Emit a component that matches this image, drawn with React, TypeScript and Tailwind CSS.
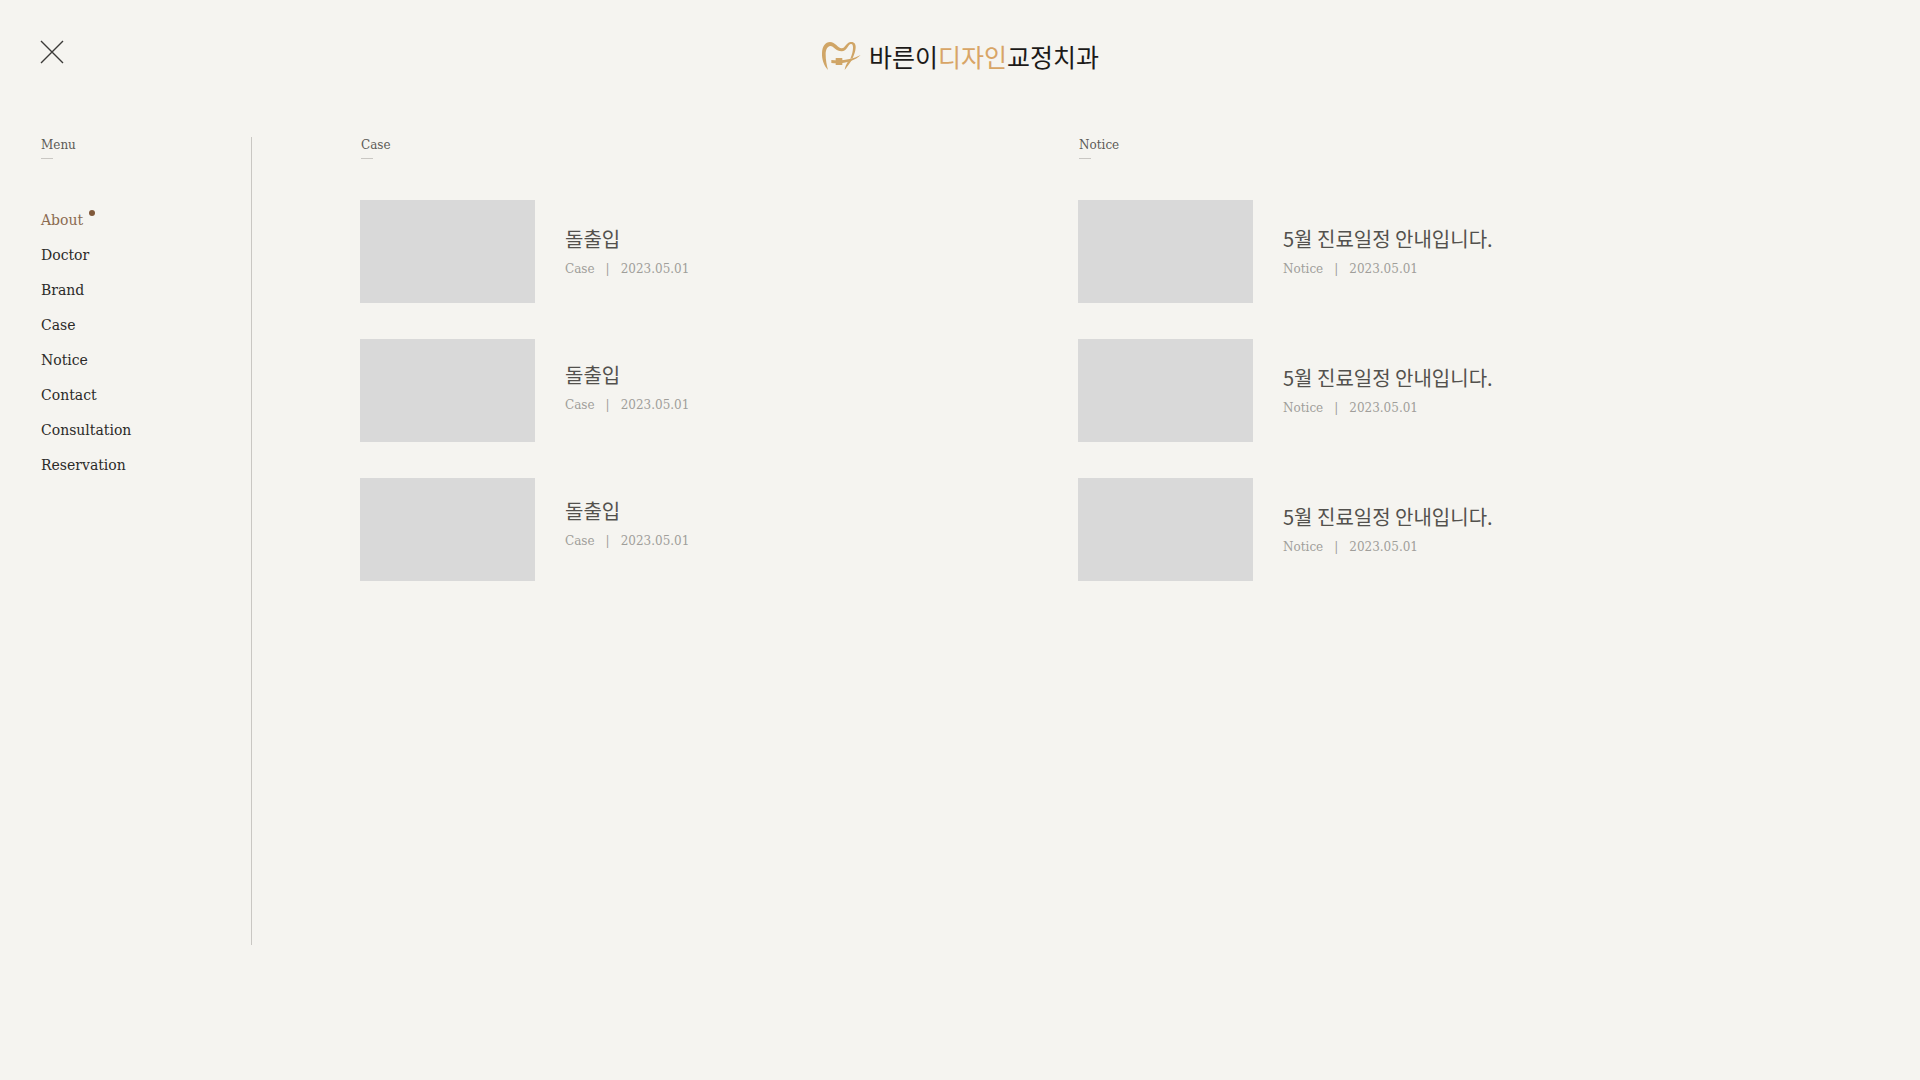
import { useState } from 'react'
import { clsx } from 'clsx'

interface Post {
  title: string
  category: string
  date: string
}

interface PostSectionProps {
  heading: string
  posts: Post[]
  textGap: string
}

const MENU = ['About', 'Doctor', 'Brand', 'Case', 'Notice', 'Contact', 'Consultation', 'Reservation']

const CASES: Post[] = Array.from({ length: 3 }, () => ({
  title: '돌출입',
  category: 'Case',
  date: '2023.05.01',
}))

const NOTICES: Post[] = Array.from({ length: 3 }, () => ({
  title: '5월 진료일정 안내입니다.',
  category: 'Notice',
  date: '2023.05.01',
}))

function ToothLogo() {
  return (
    <svg viewBox="0 0 120 90" className="h-[30px] w-10" fill="#d0a566" aria-hidden="true">
      {/* Left root, crown and the wave across the top */}
      <path d="M21 87C9 74 2 55 3 36C4 15 13 3 27 3C43 3 50 21 62 22C72 23 74 6 88 3C99 1 105 8 104 20C103 32 99 42 95 51L88 53C93 40 96 30 96 20C96 10 93 8 89 9C80 12 78 31 62 31C45 31 38 15 28 15C18 16 14 28 14 40C14 57 17 73 21 87Z" />
      {/* Bracket and wire */}
      <rect x="44" y="51" width="20" height="21" rx="1" />
      <path d="M31 57C61 61 91 56 119 42C102 60 68 70 31 66Z" />
      {/* Right root */}
      <path d="M84 58L95 53C87 65 80 76 71 87C72 77 77 67 84 58Z" />
    </svg>
  )
}

function SectionHeading({ children }: { children: string }) {
  return (
    <h2 className="pl-px text-xs leading-4 text-[#5c5a56]">
      {children}
      <span className="mt-[5px] block h-px w-3 bg-[#c9c7c3]" />
    </h2>
  )
}

function PostSection({ heading, posts, textGap }: PostSectionProps) {
  return (
    <section>
      <SectionHeading>{heading}</SectionHeading>
      <div className="mt-[41px] flex gap-[30px]">
        <div className="flex flex-col gap-9">
          {posts.map((_, i) => (
            <div key={i} className="h-[103px] w-[175px] bg-[#d9d9d9]" />
          ))}
        </div>
        <ul className={clsx('flex flex-col pt-[25px]', textGap)}>
          {posts.map((post, i) => (
            <li key={i}>
              <a href="#" className="block">
                <h3 className="font-['Noto_Sans_CJK_KR',sans-serif] text-xl leading-7 text-[#53514d]">
                  {post.title}
                </h3>
                <p className="mt-2 flex gap-[11px] text-xs leading-4 text-[#a09e9a]">
                  <span>{post.category}</span>
                  <span>|</span>
                  <time>{post.date}</time>
                </p>
              </a>
            </li>
          ))}
        </ul>
      </div>
    </section>
  )
}

export default function App() {
  const [active, setActive] = useState('About')

  return (
    <div className="flex min-h-screen flex-col bg-[#f5f4f0] pb-[135px] font-['DejaVu_Serif','Noto_Sans_CJK_KR',serif]">
      <header className="grid h-[137px] grid-cols-3 items-start px-10 pt-10">
        <button type="button" aria-label="Close menu" className="h-6 w-6">
          <svg viewBox="0 0 24 24" className="h-6 w-6" stroke="#3b3a38" strokeWidth="1.4">
            <path d="M1 1L23 23M23 1L1 23" />
          </svg>
        </button>
        <a href="#" className="flex items-center justify-center gap-2">
          <ToothLogo />
          <span className="font-['Noto_Sans_CJK_KR',sans-serif] text-[25px] leading-8 text-[#1c1a18]">
            바른이<span className="text-[#d8a566]">디자인</span>교정치과
          </span>
        </a>
      </header>

      <main className="flex flex-1">
        <nav className="w-[252px] shrink-0 border-r border-[#c9c7c3] pl-10">
          <SectionHeading>Menu</SectionHeading>
          <ul className="mt-[43px] pl-px">
            {MENU.map((item) => (
              <li key={item} className="h-[35px]">
                <a
                  href="#"
                  onClick={() => setActive(item)}
                  className={clsx(
                    'inline-flex text-sm leading-9',
                    item === active ? 'text-[#8b6b50]' : 'text-[#2b2a28]',
                  )}
                >
                  {item}
                  {item === active && <span className="mt-2 ml-1.5 h-1.5 w-1.5 rounded-full bg-[#80593a]" />}
                </a>
              </li>
            ))}
          </ul>
        </nav>

        <div className="grid flex-1 grid-cols-2 pr-[124px] pl-[108px]">
          <PostSection heading="Case" posts={CASES} textGap="gap-[84px]" />
          <PostSection heading="Notice" posts={NOTICES} textGap="gap-[87px]" />
        </div>
      </main>
    </div>
  )
}
